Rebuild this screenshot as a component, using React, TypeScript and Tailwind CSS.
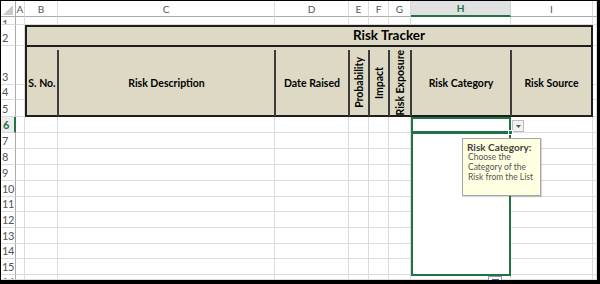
import React from "react";

const LETTERS = ["", "A", "B", "C", "D", "E", "F", "G", "H", "I", ""];

type Cell = { r: number; c: number };

function buildCells(): Cell[] {
  const out: Cell[] = [];
  for (let r = 0; r <= 16; r++) {
    for (let c = 0; c <= 10; c++) {
      if (r >= 2 && r <= 5 && c >= 2 && c <= 9) continue; // table
      if (c === 8 && r >= 7 && r <= 15) continue; // selected block
      out.push({ r, c });
    }
  }
  return out;
}

function CornerCell() {
  return (
    <div className="relative bg-white border-r border-b border-[#ababab]">
      <svg className="absolute left-[2px] top-[4px]" width="11" height="11" viewBox="0 0 11 11">
        <polygon points="10,0 10,10 0,10" fill="#c8c8c8" />
      </svg>
    </div>
  );
}

function ColHeader({ c }: { c: number }) {
  if (c === 8) {
    return (
      <div className="flex items-center justify-center bg-[#e1e1e1] border-r border-[#d0d0d0] border-b-2 border-b-[#217346] text-[10px] font-bold text-[#217346] leading-none">
        H
      </div>
    );
  }
  return (
    <div className="flex items-center justify-center bg-white border-r border-[#dadada] border-b border-b-[#ababab] text-[10px] text-[#555] leading-none overflow-hidden">
      {LETTERS[c]}
    </div>
  );
}

function RowHeader({ r }: { r: number }) {
  if (r === 6) {
    return (
      <div className="flex items-end pb-[2px] pl-[2px] bg-[#ececec] border-b border-[#dadada] border-r-2 border-r-[#217346] text-[11px] font-bold text-[#217346] leading-none">
        6
      </div>
    );
  }
  const clipTop = r === 1 || r === 16;
  return (
    <div
      className={
        clipTop
          ? "flex items-start pt-[1px] pl-[1px] overflow-hidden bg-white border-b border-[#dadada] border-r border-r-[#ababab] text-[11px] text-[#555] leading-none"
          : "flex items-end pb-[2px] pl-[1px] overflow-hidden bg-white border-b border-[#dadada] border-r border-r-[#ababab] text-[11px] text-[#555] leading-none tracking-[-0.5px]"
      }
    >
      {r}
    </div>
  );
}

function PlainCell() {
  return <div className="bg-white border-r border-b border-[#dcdcdc]" />;
}

function SelectedH6() {
  return (
    <div className="relative bg-white border-r border-b border-[#dcdcdc]">
      <div className="absolute top-0 left-0 -right-px -bottom-px border-2 border-[#217346] z-10" />
      <div className="absolute -right-[3px] -bottom-[3px] w-[5px] h-[5px] bg-[#217346] border border-white z-20" />
    </div>
  );
}

function DropdownCell() {
  return (
    <div className="relative bg-white border-r border-b border-[#dcdcdc]">
      <div className="absolute left-[1px] top-[3px] w-[12px] h-[12px] bg-[#f3f3f3] border border-[#bdbdbd] flex items-center justify-center z-10">
        <svg width="5" height="3" viewBox="0 0 5 3">
          <polygon points="0,0 5,0 2.5,3" fill="#555" />
        </svg>
      </div>
    </div>
  );
}

function renderCell({ r, c }: Cell) {
  const key = `${r}-${c}`;
  if (r === 0 && c === 0) return <CornerCell key={key} />;
  if (r === 0) return <ColHeader key={key} c={c} />;
  if (c === 0) return <RowHeader key={key} r={r} />;
  if (r === 6 && c === 8) return <SelectedH6 key={key} />;
  if (r === 6 && c === 9) return <DropdownCell key={key} />;
  return <PlainCell key={key} />;
}

function RiskTable() {
  return (
    <div className="col-start-3 col-end-11 row-start-3 row-end-7 z-10 flex flex-col bg-[#ddd9c4] border-2 border-[#1e1e1e] text-black">
      <div className="h-[20px] shrink-0 flex items-center justify-center pl-[160px] border-b-2 border-[#1e1e1e] text-[13.5px] font-bold leading-none">
        Risk Tracker
      </div>
      <div className="flex flex-1 text-[10.5px] font-bold leading-none pt-[3px]">
        <div className="w-[32px] shrink-0 flex items-center justify-center border-r-2 border-[#3d3d3d] whitespace-nowrap">
          S. No.
        </div>
        <div className="w-[217px] shrink-0 flex items-center justify-center border-r-2 border-[#3d3d3d]">
          Risk Description
        </div>
        <div className="w-[74px] shrink-0 flex items-center justify-center border-r-2 border-[#3d3d3d] whitespace-nowrap">
          Date Raised
        </div>
        <div className="w-[20px] shrink-0 flex items-center justify-center border-r-2 border-[#3d3d3d]">
          <span className="[writing-mode:vertical-rl] rotate-180 whitespace-nowrap">Probability</span>
        </div>
        <div className="w-[20px] shrink-0 flex items-center justify-center border-r-2 border-[#3d3d3d]">
          <span className="[writing-mode:vertical-rl] rotate-180 whitespace-nowrap">Impact</span>
        </div>
        <div className="w-[22px] shrink-0 flex items-center justify-center border-r-2 border-[#3d3d3d]">
          <span className="[writing-mode:vertical-rl] rotate-180 whitespace-nowrap">Risk Exposure</span>
        </div>
        <div className="w-[100px] shrink-0 flex items-center justify-center border-r-2 border-[#3d3d3d] whitespace-nowrap">
          Risk Category
        </div>
        <div className="flex-1 flex items-center justify-center whitespace-nowrap">Risk Source</div>
      </div>
    </div>
  );
}

export default function App() {
  const cells = buildCells();
  return (
    <div className="w-[600px] h-[284px] bg-black border-t border-l border-r-[3px] border-b-4 border-black font-['Lato',sans-serif]">
      <div className="relative w-[596px] h-[279px] overflow-hidden bg-white">
        <div className="grid grid-cols-[15px_9px_33px_217px_74px_20px_20px_22px_100px_82px_4px] grid-rows-[16px_8px_21px_39px_15px_17px_16px_16px_16px_16px_16px_15px_16px_16px_15px_16px_5px]">
          <RiskTable />
          <div className="col-start-9 col-end-10 row-start-8 row-end-17 bg-white border-2 border-[#217346] -mt-px -mb-px z-10" />
          {cells.map(renderCell)}
        </div>

        {/* Input message tooltip */}
        <div className="absolute left-[461px] top-[137px] w-[79px] h-[58px] bg-[#ffffe1] border border-[#a6a6a6] shadow-[1px_1px_1px_rgba(0,0,0,0.15)] pl-[4px] pt-[3px] text-[8.5px] leading-[10px] text-[#555] z-30 whitespace-nowrap">
          <div className="font-bold text-[10px] text-[#404040]">Risk Category:</div>
          <div className="pl-[1px]">Choose the</div>
          <div className="pl-[1px]">Category of the</div>
          <div className="pl-[1px]">Risk from the List</div>
        </div>

        {/* Paste/quick icon at the bottom edge */}
        <div className="absolute left-[487px] top-[275px] w-[14px] h-[10px] bg-white border border-[#9a9a9a] z-30 flex justify-center pt-[2px]">
          <div className="w-[7px] h-[5px] bg-[#2b63c5]" />
        </div>
      </div>
    </div>
  );
}
